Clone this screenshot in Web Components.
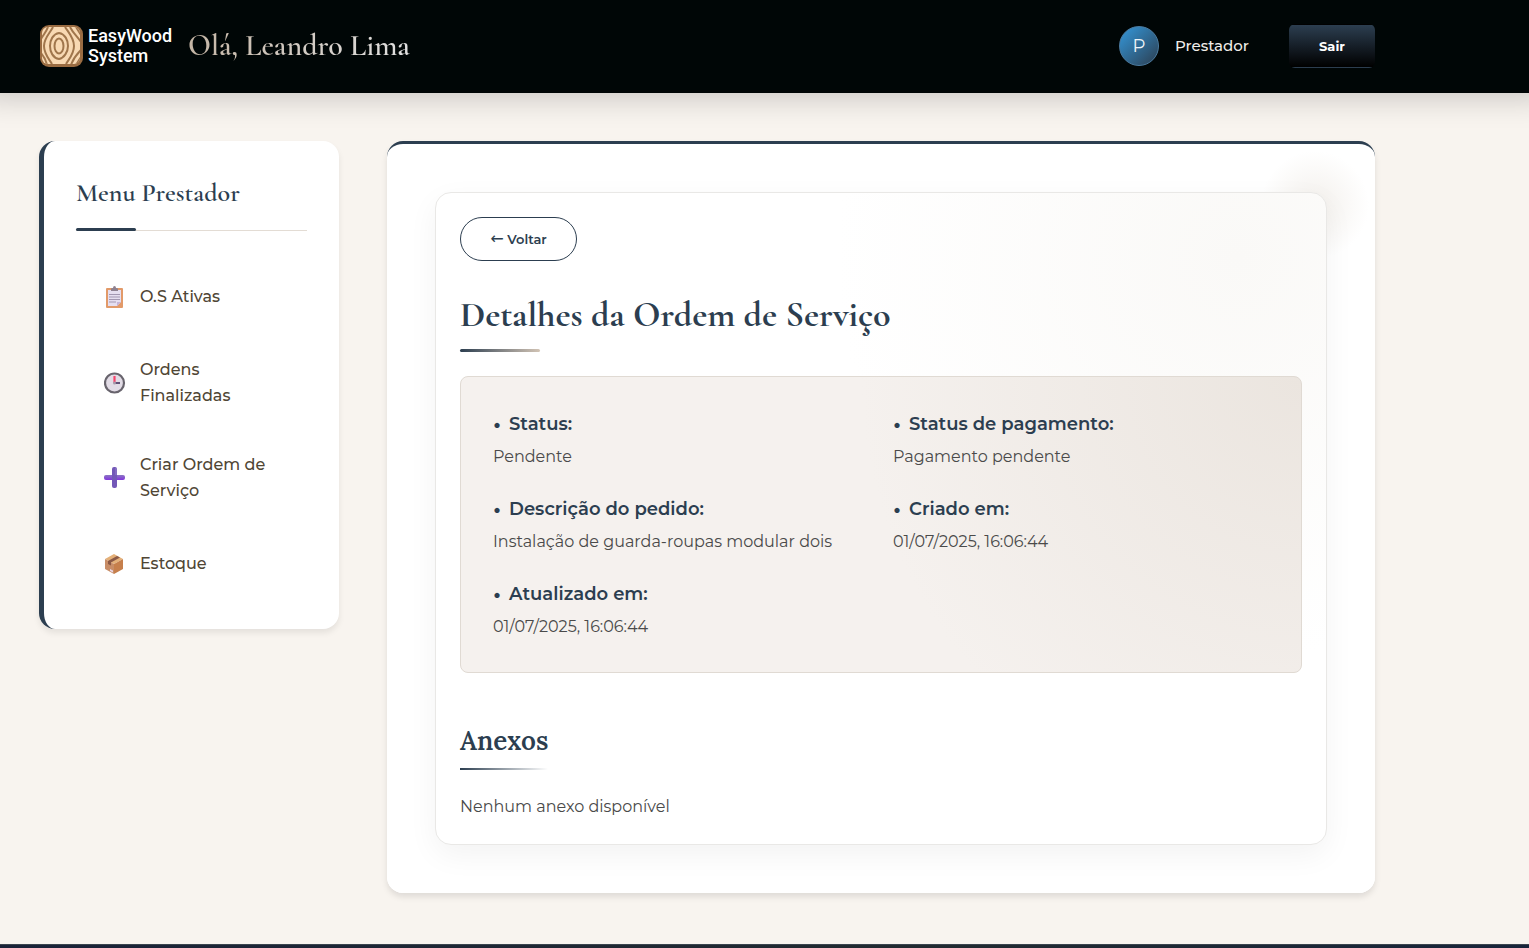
<!DOCTYPE html>
<html lang="pt-BR">
<head>
<meta charset="utf-8">
<meta name="viewport" content="width=device-width, initial-scale=1">
<title>EasyWood System</title>
<style>
  :root {
    --navy: #2c3e50;
    --sand: #d2c4b5;
    --line: #e3dcd4;
    --sans: "Montserrat", "Inter", sans-serif;
    --title: "Cormorant Garamond", "Liberation Serif", serif;
    --serif: "Lora", "Liberation Serif", serif;
  }
  html, body { margin: 0; }
  body { background: #f8f4ef; font: 16px/26px var(--sans); color: #444; }
</style>
</head>
<body>
<wood-app></wood-app>

<script>
const define = (name, html) => customElements.define(name, class extends HTMLElement {
  constructor() {
    super();
    const t = document.createElement('template');
    t.innerHTML = html;
    this.attachShadow({ mode: 'open' }).append(t.content.cloneNode(true));
  }
});

define('wood-logo', `
<style>
  :host { display: flex; align-items: center; gap: 5px; color: #fff; font: 500 18px/20px "Roboto", sans-serif; }
  svg { display: block; width: 44px; height: 44px; }
</style>
<svg viewBox="0 0 44 44" aria-hidden="true">
  <defs><clipPath id="c"><rect x="3" y="3" width="38" height="37" rx="6"/></clipPath></defs>
  <rect x="1" y="1" width="43" height="42" rx="9" fill="#9a6c42"/>
  <rect x="3" y="3" width="38" height="37" rx="6" fill="#f8d9b3"/>
  <g clip-path="url(#c)" fill="none" stroke="#a0764c" stroke-width="2">
    <ellipse cx="20" cy="22" rx="4.500" ry="7.500"/>
    <path d="M20 9c6 1 9 7 9 13s-4 12-9 13c-6-1-9-7-9-13s3-12 9-13z"/>
    <path d="M14 3C11 9 5 14 5 22s5 13 8 18M26 3c4 6 9 11 9 19s-5 13-8 18"/>
    <path d="M9 3C7 9 3 12 1 17M1 28c3 3 6 8 7 13M31 3c3 6 7 9 11 15M42 26c-4 4-8 9-10 15M37 3l5 8M42 33l-5 8"/>
  </g>
</svg>
<span>EasyWood<br>System</span>`);

define('wood-header', `
<style>
  :host { display: block; background: #000606; box-shadow: 0 -16px 30px 20px rgba(0,0,0,.2); position: relative; padding: 24px 39px 25px; }
  .bar { display: flex; align-items: center; max-width: 1336px; height: 44px; }
  h1 { margin: 0 auto 0 16px; font: 600 30px/40px var(--title); background: linear-gradient(90deg, #c4b5a5, #e0e0e0); -webkit-background-clip: text; background-clip: text; color: transparent; }
  .avatar { box-sizing: border-box; width: 40px; height: 40px; border-radius: 50%; border: 1px solid #4b7ba0; background: linear-gradient(135deg, #3498db, #2c3e50); color: #eef4f8; font-size: 18px; line-height: 38px; text-align: center; }
  .role { margin: 0 40px 0 16px; color: #f0ede9; font-size: 15px; font-weight: 500; }
  button { box-sizing: border-box; width: 86px; height: 44px; padding: 0; border: 1px solid transparent; border-radius: 6px; background: linear-gradient(#2c3e50, #000); color: #fff; font: 700 13px/20px var(--sans); }
</style>
<header class="bar">
  <wood-logo></wood-logo>
  <h1><slot></slot></h1>
  <div class="avatar">P</div>
  <span class="role">Prestador</span>
  <button type="button">Sair</button>
</header>`);

define('menu-item', `
<style>
  :host { display: block; }
  a { display: flex; align-items: center; gap: 14px; box-sizing: border-box; min-height: 66px; padding: 16px 28px; color: #504635; font-weight: 500; text-decoration: none; }
  ::slotted(svg) { display: block; flex: none; width: 22px; height: 22px; }
</style>
<a href="#"><slot name="icon"></slot><span><slot></slot></span></a>`);

define('side-menu', `
<style>
  :host { display: block; box-sizing: border-box; background: #fff; border-left: 5px solid var(--navy); border-radius: 16px; padding: 32px; box-shadow: 0 4px 6px rgba(0,0,0,.08); }
  h2 { margin: 0 0 33px; padding-bottom: 17px; border-bottom: 1px solid var(--line); font: 600 26px/40px var(--title); color: var(--navy); position: relative; }
  h2::after { content: ""; position: absolute; left: 0; bottom: -1px; width: 60px; height: 3px; border-radius: 2px; background: var(--navy); }
  nav { display: grid; gap: 11px; }
</style>
<h2>Menu Prestador</h2>
<nav aria-label="Menu Prestador">
  <menu-item>
    <svg slot="icon" viewBox="0 0 22 22" aria-hidden="true"><rect x="2" y="2" width="17" height="20" rx="1" fill="#e29a69"/><path d="M4 4h13v12l-4 4H4z" fill="#e5def0"/><path d="M13 20v-4h4z" fill="#c5b4d8"/><path d="M7 5V3q0-1 2-1 0-2 1.500-2T12 2q2 0 2 1v2z" fill="#8e8190"/><path d="M5 8.500h11M5 11h11M5 13.500h11M5 16h7" stroke="#a297b2"/></svg>
    O.S Ativas
  </menu-item>
  <menu-item>
    <svg slot="icon" viewBox="0 0 22 22" aria-hidden="true"><circle cx="10.500" cy="11" r="9.500" fill="#e2dce6" stroke="#68646d" stroke-width="2.200"/><path d="M10.500 4v7" stroke="#f8456c" stroke-width="2.200"/><path d="M10 11h6" stroke="#402c5a" stroke-width="1.600"/><circle cx="10.500" cy="11" r="1.500" fill="#a79aab"/></svg>
    Ordens Finalizadas
  </menu-item>
  <menu-item>
    <svg slot="icon" viewBox="0 0 22 22" aria-hidden="true"><defs><linearGradient id="h" x2="0" y2="1"><stop stop-color="#8b76c2"/><stop offset="1" stop-color="#8235dc"/></linearGradient></defs><rect x="0" y="8" width="21" height="5" rx="2" fill="url(#h)"/><rect x="8" y="0" width="5" height="21" rx="2" fill="#7358b8"/><path d="M12 1v7" stroke="#9681cb"/></svg>
    Criar Ordem de Serviço
  </menu-item>
  <menu-item>
    <svg slot="icon" viewBox="0 0 22 22" aria-hidden="true"><path d="M1 6l9-5 9 5-9 5z" fill="#e4b078"/><path d="M1 6l9 5v10l-9-5z" fill="#c88d67"/><path d="M19 6l-9 5v10l9-5z" fill="#c67f4c"/><path d="M4 8l9-5 3 1.500-9 5v3l-3-1.500z" fill="#8b5946"/><path d="M6 16l3 1.500v2L6 18z" fill="#e9d6e4"/></svg>
    Estoque
  </menu-item>
</nav>`);

define('info-field', `
<style>
  :host { display: grid; gap: 5px; }
  dt { display: flex; gap: 8px; font: 600 18px/30px var(--sans); color: var(--navy); }
  dt span { font-size: 24px; }
  dd { margin: 0; font-size: 16px; line-height: 26px; color: #4a4a4a; }
</style>
<dt><span aria-hidden="true">•</span><slot name="label"></slot></dt>
<dd><slot></slot></dd>`);

define('order-details', `
<style>
  :host { display: block; position: relative; box-sizing: border-box; border: 1px solid #e9e8e6; border-radius: 16px; padding: 24px; box-shadow: 0 10px 30px rgba(0,0,0,.05);
    background: radial-gradient(circle 400px at right 89px top 65px, #faf9f7, #fff) #fff; }
  button { box-sizing: border-box; display: block; width: 117px; height: 44px; padding: 0; border: 1px solid var(--navy); border-radius: 22px; background: #fff; color: var(--navy); font: 600 13px/20px var(--sans); }
  button span { font-family: "DejaVu Sans", sans-serif; font-size: 16px; font-weight: 400; }
  h2 { margin: 32px 0 24px; padding-bottom: 15px; font: 700 36px/44px var(--title); color: var(--navy); position: relative; }
  h2::after { content: ""; position: absolute; left: 0; bottom: 0; width: 80px; height: 3px; border-radius: 2px; background: linear-gradient(90deg, var(--navy), var(--sand)); }
  dl { display: grid; grid-template-columns: 1fr 1fr; gap: 24px; margin: 0; padding: 32px; border: 1px solid #e0dad3; border-radius: 8px;
    background: radial-gradient(circle 440px at right 0 top 0, #ebe5df, #f5f1ee) #f5f1ee; }
  h3 { width: fit-content; margin: 48px 0 24px; padding: 0 0 9px; font: 600 26px/40px var(--serif); color: var(--navy);
    background: linear-gradient(90deg, var(--navy), transparent) bottom / 100% 2px no-repeat; }
  p { margin: 0; color: #4a4a4a; }
</style>
<button type="button"><span>←</span> Voltar</button>
<h2>Detalhes da Ordem de Serviço</h2>
<dl>
  <info-field><span slot="label">Status:</span>Pendente</info-field>
  <info-field><span slot="label">Status de pagamento:</span>Pagamento pendente</info-field>
  <info-field><span slot="label">Descrição do pedido:</span>Instalação de guarda-roupas modular dois</info-field>
  <info-field><span slot="label">Criado em:</span>01/07/2025, 16:06:44</info-field>
  <info-field><span slot="label">Atualizado em:</span>01/07/2025, 16:06:44</info-field>
</dl>
<h3>Anexos</h3>
<p>Nenhum anexo disponível</p>`);

define('content-card', `
<style>
  :host { display: block; box-sizing: border-box; position: relative; background: radial-gradient(circle 54px at right 60px top 61px, #f3f0ec, #fff) #fff; border-top: 3px solid var(--navy); border-radius: 16px; padding: 48px; box-shadow: 0 4px 6px rgba(0,0,0,.1); }
</style>
<slot></slot>`);

define('wood-app', `
<style>
  :host { display: flex; flex-direction: column; min-height: 100vh; }
  main { flex: 1; display: grid; grid-template-columns: 300px minmax(0, 1fr); align-items: start; gap: 48px; box-sizing: border-box; width: 100%; max-width: 1414px; padding: 48px 39px; }
  footer { height: 4px; box-sizing: border-box; border-top: 1px solid #3a444e; background: linear-gradient(90deg, #1a2238, #222a30 60%, #18243a); }
</style>
<wood-header>Olá, Leandro Lima</wood-header>
<main>
  <side-menu></side-menu>
  <content-card><order-details></order-details></content-card>
</main>
<footer></footer>`);
</script>
</body>
</html>
